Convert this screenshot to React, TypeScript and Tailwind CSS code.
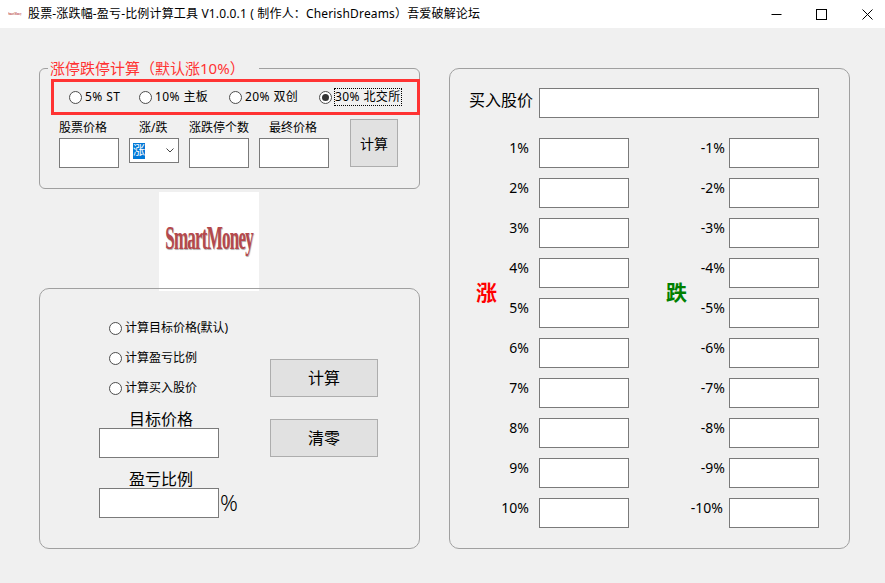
const pctRows = [1, 2, 3, 4, 5, 6, 7, 8, 9, 10];

function Box({ className }: { className: string }) {
  return <input type="text" readOnly className={`block h-[30px] border border-[#7a7a7a] bg-white outline-none ${className}`} />;
}

function Radio({ label, checked, focused, className }: { label: string; checked?: boolean; focused?: boolean; className?: string }) {
  return (
    <div className={`flex h-[18px] items-center ${className ?? ""}`}>
      <span className="flex h-[13px] w-[13px] shrink-0 items-center justify-center rounded-full border border-[#4d4d4d] bg-white">
        {checked ? <span className="h-[7px] w-[7px] rounded-full bg-[#333333]" /> : null}
      </span>
      <span className={`ml-[3px] whitespace-nowrap text-[12px] leading-[16px] text-black ${focused ? "outline outline-1 outline-dotted outline-black" : ""}`}>{label}</span>
    </div>
  );
}

function PctRow({ pct, labelW, gap }: { pct: string; labelW: string; gap: string }) {
  return (
    <div className="flex h-[40px]">
      <span className={`h-[20px] text-right text-[14px] leading-[20px] text-black ${labelW} ${gap}`}>{pct}</span>
      <Box className="w-[90px]" />
    </div>
  );
}

function GrayButton({ label, className }: { label: string; className: string }) {
  return (
    <div className={`flex items-center justify-center border border-[#adadad] bg-[#e1e1e1] text-black ${className}`}>{label}</div>
  );
}

function TitleBar() {
  return (
    <div className="flex h-[28px] items-center bg-white pl-[8px]">
      <span className="w-[14px] origin-left scale-x-[0.6] whitespace-nowrap text-[4px] font-bold leading-[4px] text-[#c05050] [font-family:'Liberation_Serif',serif]">SmartMoney</span>
      <span className="ml-[6px] whitespace-nowrap text-[12px] tracking-[0.16px] text-black">股票-涨跌幅-盈亏-比例计算工具 V1.0.0.1 ( 制作人：CherishDreams）吾爱破解论坛</span>
      <div className="ml-auto flex items-center">
        <svg width="11" height="11" viewBox="0 0 11 11" className="mr-[34px]" fill="none" stroke="#000">
          <path d="M0.5 5.5H10.5" />
        </svg>
        <svg width="11" height="11" viewBox="0 0 11 11" className="mr-[35px]" fill="none" stroke="#000">
          <rect x="0.5" y="0.5" width="10" height="10" />
        </svg>
        <svg width="11" height="11" viewBox="0 0 11 11" className="mr-[12px]" fill="none" stroke="#000">
          <path d="M0.5 0.5L10.5 10.5M10.5 0.5L0.5 10.5" />
        </svg>
      </div>
    </div>
  );
}

function LimitPanel() {
  return (
    <div className="relative h-[121px] rounded-[6px] border border-[#a0a0a0]">
      <span className="absolute left-[8px] top-[-11px] whitespace-nowrap bg-[#f0f0f0] pl-[2px] pr-[14px] text-[15px] leading-[20px] text-[#ff3333]">涨停跌停计算（默认涨10%）</span>
      <div className="ml-[11px] mt-[10px] flex h-[36px] w-[369px] items-center border-[3px] border-[#ff3333] pl-[15px] tracking-[0.4px]">
        <Radio label="5% ST" className="w-[70px]" />
        <Radio label="10% 主板" className="w-[90px]" />
        <Radio label="20% 双创" className="w-[90px]" />
        <Radio label="30% 北交所" checked focused />
      </div>
      <div className="ml-[19px] mt-[3px] flex">
        <div className="w-[70px]">
          <div className="h-[20px] text-[12px] leading-[20px] text-black">股票价格</div>
          <Box className="w-[60px]" />
        </div>
        <div className="w-[60px]">
          <div className="h-[20px] pl-[10px] text-[12px] leading-[20px] text-black">涨/跌</div>
          <div className="flex h-[25px] w-[50px] items-center justify-between border border-[#7a7a7a] bg-white pl-[3px] pr-[4px]">
            <span className="bg-[#0078d7] text-[12px] leading-[16px] text-white">涨</span>
            <svg width="8" height="5" viewBox="0 0 8 5" fill="none" stroke="#444">
              <path d="M0.5 0.5L4 4L7.5 0.5" />
            </svg>
          </div>
        </div>
        <div className="w-[70px]">
          <div className="h-[20px] whitespace-nowrap text-[12px] leading-[20px] text-black">涨跌停个数</div>
          <Box className="w-[60px]" />
        </div>
        <div className="w-[91px]">
          <div className="h-[20px] pl-[10px] text-[12px] leading-[20px] text-black">最终价格</div>
          <Box className="w-[70px]" />
        </div>
        <GrayButton label="计算" className="mt-[1px] h-[48px] w-[48px] text-[14px]" />
      </div>
    </div>
  );
}

function Logo() {
  return (
    <div className="ml-[120px] mt-[3px] flex h-[99px] w-[100px] items-center justify-center overflow-hidden bg-white pb-[6px]">
      <span className="origin-center scale-x-[0.515] whitespace-nowrap text-[33px] font-bold tracking-[-1.5px] text-[#b5484c] [font-family:'Liberation_Serif',serif] [text-shadow:1px_1px_1px_#b0b0b0]">SmartMoney</span>
    </div>
  );
}

function TargetPanel() {
  return (
    <div className="relative -mt-[3px] flex h-[261px] rounded-[10px] border border-[#a0a0a0] pl-[59px] pt-[30px]">
      <div className="w-[171px]">
        <div className="ml-[10px] flex flex-col gap-[12px]">
          <Radio label="计算目标价格(默认)" />
          <Radio label="计算盈亏比例" />
          <Radio label="计算买入股价" />
        </div>
        <div className="mt-[11px] h-[20px] pl-[30px] text-[16px] leading-[22px] text-black">目标价格</div>
        <Box className="w-[120px]" />
        <div className="mt-[10px] h-[20px] pl-[30px] text-[16px] leading-[22px] text-black">盈亏比例</div>
        <div className="flex">
          <Box className="w-[120px]" />
          <span className="ml-[1px] text-[22px] font-light leading-[28px] text-black">%</span>
        </div>
      </div>
      <div className="mt-[40px] flex flex-col gap-[22px]">
        <GrayButton label="计算" className="h-[38px] w-[108px] text-[16px]" />
        <GrayButton label="清零" className="h-[38px] w-[108px] text-[16px]" />
      </div>
    </div>
  );
}

function PricePanel() {
  return (
    <div className="ml-[29px] h-[481px] w-[401px] rounded-[10px] border border-[#a0a0a0]">
      <div className="ml-[19px] mt-[19px] flex">
        <span className="h-[24px] w-[70px] whitespace-nowrap text-[16px] leading-[24px] text-black">买入股价</span>
        <Box className="w-[280px]" />
      </div>
      <div className="ml-[26px] mt-[20px] flex">
        <span className="mt-[142px] h-[24px] w-[21px] text-[21px] font-bold leading-[24px] text-[#ff0000]">涨</span>
        <div>
          {pctRows.map((n) => (
            <PctRow key={n} pct={`${n}%`} labelW="w-[32px]" gap="mr-[10px]" />
          ))}
        </div>
        <span className="ml-[37px] mt-[142px] h-[24px] w-[21px] text-[21px] font-bold leading-[24px] text-[#008000]">跌</span>
        <div>
          {pctRows.map((n) => (
            <PctRow key={n} pct={`-${n}%`} labelW={n === 10 ? "w-[36px]" : "w-[38px]"} gap={n === 10 ? "mr-[6px]" : "mr-[4px]"} />
          ))}
        </div>
      </div>
    </div>
  );
}

export default function App() {
  return (
    <div className="h-[583px] w-[885px] overflow-hidden bg-[#f0f0f0] [font-family:'Noto_Sans','Noto_Sans_CJK_SC',sans-serif]">
      <TitleBar />
      <div className="flex pl-[39px] pt-[40px]">
        <div className="w-[381px]">
          <LimitPanel />
          <Logo />
          <TargetPanel />
        </div>
        <PricePanel />
      </div>
    </div>
  );
}
